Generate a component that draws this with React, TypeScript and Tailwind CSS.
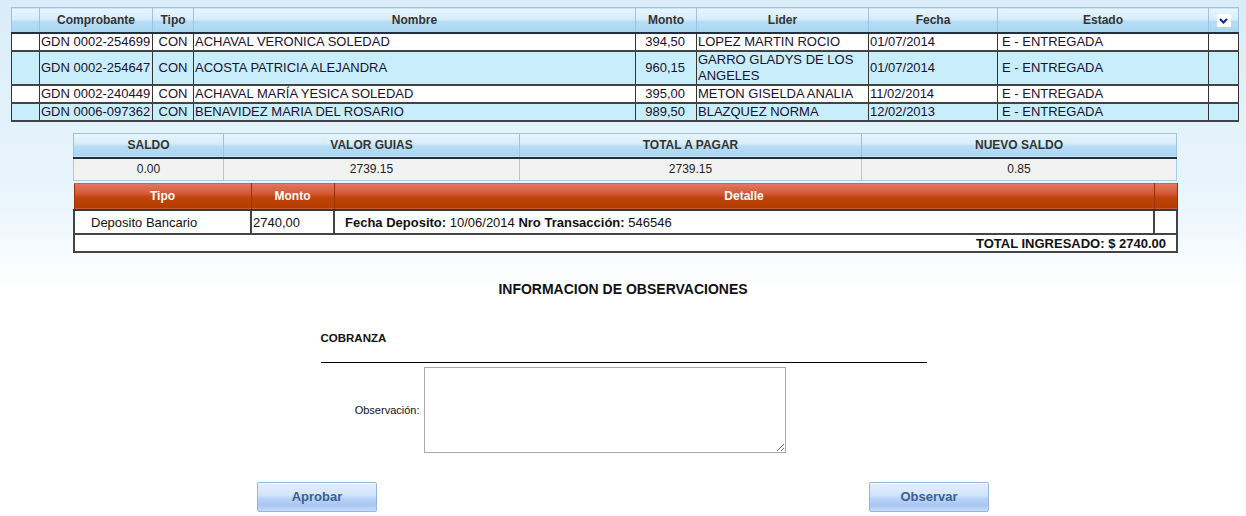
import React from 'react';

const guias = [
  { comp: 'GDN 0002-254699', tipo: 'CON', nombre: 'ACHAVAL VERONICA SOLEDAD', monto: '394,50', lider: 'LOPEZ MARTIN ROCIO', fecha: '01/07/2014', estado: 'E - ENTREGADA' },
  { comp: 'GDN 0002-254647', tipo: 'CON', nombre: 'ACOSTA PATRICIA ALEJANDRA', monto: '960,15', lider: 'GARRO GLADYS DE LOS ANGELES', fecha: '01/07/2014', estado: 'E - ENTREGADA' },
  { comp: 'GDN 0002-240449', tipo: 'CON', nombre: 'ACHAVAL MARÍA YESICA SOLEDAD', monto: '395,00', lider: 'METON GISELDA ANALIA', fecha: '11/02/2014', estado: 'E - ENTREGADA' },
  { comp: 'GDN 0006-097362', tipo: 'CON', nombre: 'BENAVIDEZ MARIA DEL ROSARIO', monto: '989,50', lider: 'BLAZQUEZ NORMA', fecha: '12/02/2013', estado: 'E - ENTREGADA' },
];

const blueHead =
  'bg-[linear-gradient(to_bottom,#eaf5fd_0%,#d6ecfa_48%,#b9def6_52%,#a9d5f2_100%)]';
const redHead =
  'bg-[linear-gradient(to_bottom,#e27a62_0%,#d45a38_40%,#bf4408_55%,#b63c00_100%)]';

function BlueTh({ children, h = 'h-[25px]' }: { children?: React.ReactNode; h?: string }) {
  return (
    <th
      className={`${blueHead} ${h} border-x border-t border-[#9cc4e2] border-b-2 border-b-[#22313f] p-0 text-center text-[12px] font-bold text-[#333]`}
    >
      {children}
    </th>
  );
}

function RedTh({ children }: { children?: React.ReactNode }) {
  return (
    <th className={`${redHead} h-[27px] border-x border-[#9a3000] border-t border-t-[#c9654c] border-b-2 border-b-[#3a3a3a] p-0 text-center text-[12px] font-bold text-white`}>
      {children}
    </th>
  );
}

function ChevronBox() {
  return (
    <span className="inline-flex h-[13px] w-[14px] items-center justify-center bg-white align-middle">
      <svg width="9" height="6" viewBox="0 0 9 6">
        <path d="M1 1 L4.5 4.5 L8 1" stroke="#0b2a8a" strokeWidth="2" fill="none" />
      </svg>
    </span>
  );
}

function Boton({ label }: { label: string }) {
  return (
    <button className="relative h-[30px] w-[120px] rounded-[2px] border border-[#93b6e3] bg-[linear-gradient(to_bottom,#e4efff_0%,#d2e4fc_45%,#b8d3f6_55%,#a9c8f1_80%,#c6dbf8_100%)] text-[13px] font-bold text-[#3f5f8e] shadow-[inset_0_1px_0_#f4f8ff]">
      {label}
    </button>
  );
}

const td = 'border-x border-[#333] border-b-2 border-b-[#444] p-0';

export default function App() {
  return (
    <div
      className="min-h-[516px] w-full bg-[linear-gradient(to_bottom,#d9ecf8_0px,#eaf5fc_200px,#ffffff_290px)] pt-[7px] text-[#111]"
      style={{ fontFamily: '"Liberation Sans", Arial, sans-serif' }}
    >
      {/* guias */}
      <table className="ml-[11px] w-[1228px] table-fixed border-collapse text-[13px] leading-[16px] text-[#1a1030]">
        <colgroup>
          <col className="w-[28px]" />
          <col className="w-[113px]" />
          <col className="w-[41px]" />
          <col className="w-[442px]" />
          <col className="w-[61px]" />
          <col className="w-[172px]" />
          <col className="w-[129px]" />
          <col className="w-[211px]" />
          <col className="w-[30px]" />
        </colgroup>
        <thead>
          <tr>
            <BlueTh />
            <BlueTh>Comprobante</BlueTh>
            <BlueTh>Tipo</BlueTh>
            <BlueTh>Nombre</BlueTh>
            <BlueTh>Monto</BlueTh>
            <BlueTh>Lider</BlueTh>
            <BlueTh>Fecha</BlueTh>
            <BlueTh>Estado</BlueTh>
            <BlueTh>
              <ChevronBox />
            </BlueTh>
          </tr>
        </thead>
        <tbody>
          {guias.map((g, i) => (
            <tr key={g.comp} className={i % 2 === 0 ? 'bg-white' : 'bg-[#c8eefc]'}>
              <td className={`${td} h-[18px]`} />
              <td className={`${td} pl-px`}>{g.comp}</td>
              <td className={`${td} text-center`}>{g.tipo}</td>
              <td className={`${td} pl-px`}>{g.nombre}</td>
              <td className={`${td} pr-[11px] text-right`}>{g.monto}</td>
              <td className={`${td} pl-px`}>{g.lider}</td>
              <td className={`${td} pl-px`}>{g.fecha}</td>
              <td className={`${td} pl-[4px]`}>{g.estado}</td>
              <td className={td} />
            </tr>
          ))}
        </tbody>
      </table>

      {/* resumen */}
      <table className="ml-[73px] mt-[11px] w-[1103px] table-fixed border-collapse text-[12px]">
        <colgroup>
          <col className="w-[150px]" />
          <col className="w-[296px]" />
          <col className="w-[342px]" />
          <col className="w-[315px]" />
        </colgroup>
        <thead>
          <tr>
            <BlueTh h="h-[25px]">SALDO</BlueTh>
            <BlueTh h="h-[25px]">VALOR GUIAS</BlueTh>
            <BlueTh h="h-[25px]">TOTAL A PAGAR</BlueTh>
            <BlueTh h="h-[25px]">NUEVO SALDO</BlueTh>
          </tr>
        </thead>
        <tbody>
          <tr className="bg-[#f2f2f2] text-center text-[#222]">
            <td className="h-[22px] border-x border-b border-[#a9cbe4] p-0">0.00</td>
            <td className="border-x border-b border-[#a9cbe4] p-0">2739.15</td>
            <td className="border-x border-b border-[#a9cbe4] p-0">2739.15</td>
            <td className="border-x border-b border-[#a9cbe4] p-0">0.85</td>
          </tr>
        </tbody>
      </table>

      {/* ingresos */}
      <table className="ml-[73px] mt-[2px] w-[1103px] table-fixed border-collapse text-[13px] leading-[15px] text-[#111]">
        <colgroup>
          <col className="w-[177px]" />
          <col className="w-[83px]" />
          <col className="w-[820px]" />
          <col className="w-[23px]" />
        </colgroup>
        <thead>
          <tr>
            <RedTh>Tipo</RedTh>
            <RedTh>Monto</RedTh>
            <RedTh>Detalle</RedTh>
            <RedTh />
          </tr>
        </thead>
        <tbody>
          <tr className="bg-white">
            <td className="h-[24px] border-2 border-[#444] p-0 pl-[16px]">Deposito Bancario</td>
            <td className="border-2 border-[#444] p-0 pl-px">2740,00</td>
            <td className="border-2 border-[#444] p-0 pl-[10px]">
              <b>Fecha Deposito:</b> 10/06/2014 <b>Nro Transacción:</b> 546546
            </td>
            <td className="border-2 border-[#444] p-0" />
          </tr>
          <tr className="bg-white">
            <td colSpan={4} className="h-[18px] border-2 border-[#444] p-0 pr-[10px] text-right font-bold">
              TOTAL INGRESADO: $ 2740.00
            </td>
          </tr>
        </tbody>
      </table>

      {/* observaciones */}
      <div className="mt-[28px] text-center text-[14px] font-bold leading-[16px]">INFORMACION DE OBSERVACIONES</div>

      <div className="mx-auto mt-[34px] w-[607px] pl-px">
        <div className="text-[11.5px] font-bold leading-[14px]">COBRANZA</div>
        <div className="mt-[17px] border-b border-black" />
        <div className="mt-[4px] flex items-center">
          <label className="w-[103px] pr-[4px] text-right text-[11px]">Observación:</label>
          <textarea className="h-[86px] w-[362px] resize border border-[#a9a9a9] bg-white outline-none" />
        </div>
      </div>

      <div className="mx-auto mt-[29px] flex w-[732px] justify-between">
        <Boton label="Aprobar" />
        <Boton label="Observar" />
      </div>
    </div>
  );
}
